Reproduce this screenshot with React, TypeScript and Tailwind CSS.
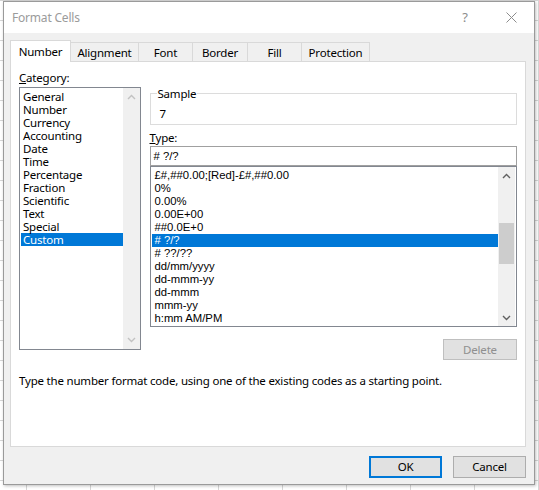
import { useState } from "react";

const categories = [
  "General",
  "Number",
  "Currency",
  "Accounting",
  "Date",
  "Time",
  "Percentage",
  "Fraction",
  "Scientific",
  "Text",
  "Special",
  "Custom",
];

const formats = [
  "£#,##0.00;[Red]-£#,##0.00",
  "0%",
  "0.00%",
  "0.00E+00",
  "##0.0E+0",
  "# ?/?",
  "# ??/??",
  "dd/mm/yyyy",
  "dd-mmm-yy",
  "dd-mmm",
  "mmm-yy",
  "h:mm AM/PM",
];

const tabs = [
  { name: "Number", w: "w-[61px]" },
  { name: "Alignment", w: "w-[68px]" },
  { name: "Font", w: "w-[54px]" },
  { name: "Border", w: "w-[55px]" },
  { name: "Fill", w: "w-[54px]" },
  { name: "Protection", w: "w-[68px]" },
];

function Chevron({ up, color }: { up?: boolean; color: string }) {
  return (
    <svg width="9" height="6" viewBox="0 0 9 6">
      <path
        d={up ? "M1 5 L4.5 1.5 L8 5" : "M1 1 L4.5 4.5 L8 1"}
        fill="none"
        stroke={color}
        strokeWidth="1.4"
      />
    </svg>
  );
}

export default function App() {
  const [category, setCategory] = useState("Custom");
  const [format, setFormat] = useState("# ?/?");

  return (
    <div className="w-[539px] h-[490px] overflow-hidden bg-white bg-[linear-gradient(to_right,#d6d6d6_1px,transparent_1px),linear-gradient(to_bottom,#d6d6d6_1px,transparent_1px)] bg-[size:64px_20px] bg-[position:26px_0px] pt-px pl-[3px] font-['Noto_Sans',sans-serif] text-[11.5px] tracking-[-0.2px] text-black">
      <div className="w-[532px] h-[484px] border border-[#9a9a9a] bg-[#f0f0f0] flex flex-col shadow-[1px_1px_3px_rgba(0,0,0,0.25)]">
        {/* Title bar */}
        <div className="h-[31px] bg-white flex items-center">
          <span className="pl-[8px] text-[12px] text-[#9b9b9b] flex-1">Format Cells</span>
          <div className="w-[46px] h-full flex items-center justify-center text-[#8c8c8c] text-[13px]">?</div>
          <div className="w-[46px] h-full flex items-center justify-center">
            <svg width="11" height="11" viewBox="0 0 11 11">
              <path d="M0.5 0.5 L10.5 10.5 M10.5 0.5 L0.5 10.5" stroke="#8c8c8c" strokeWidth="1" />
            </svg>
          </div>
        </div>

        <div className="flex flex-col pt-[7px] pl-[6px]">
          {/* Tabs */}
          <div className="flex items-end h-[21px]">
            {tabs.map((t) =>
              t.name === "Number" ? (
                <div
                  key={t.name}
                  className={`${t.w} h-[22px] -mb-px relative z-10 bg-white border-l border-t border-r border-[#d9d9d9] flex items-center justify-center pt-px`}
                >
                  {t.name}
                </div>
              ) : (
                <div
                  key={t.name}
                  className={`${t.w} h-[19px] border-t border-r border-[#d9d9d9] flex items-center justify-center pt-[2px]`}
                >
                  {t.name}
                </div>
              )
            )}
          </div>

          {/* Panel */}
          <div className="w-[516px] h-[386px] bg-white border border-[#d9d9d9] px-[8px] pt-[8px] flex flex-col">
            <div className="flex gap-[9px]">
              {/* Category */}
              <div className="w-[122px] flex flex-col">
                <div className="h-[17px] leading-[15px]">
                  <span className="underline">C</span>ategory:
                </div>
                <div className="h-[263px] border border-[#828790] flex">
                  <div className="flex-1 pt-[2px] pl-px">
                    {categories.map((c) => (
                      <div
                        key={c}
                        onClick={() => setCategory(c)}
                        className={`h-[13px] leading-[13px] pl-[2px] ${c === category ? "bg-[#0078d7] text-white" : ""}`}
                      >
                        {c}
                      </div>
                    ))}
                  </div>
                  <div className="w-[17px] bg-[#f0f0f0] flex flex-col justify-between items-center py-[6px]">
                    <Chevron up color="#c2c2c2" />
                    <Chevron color="#c2c2c2" />
                  </div>
                </div>
              </div>

              {/* Right side */}
              <div className="w-[369px] flex flex-col">
                <fieldset className="mt-[16px] h-[39px] border border-[#dcdcdc] pl-[6px]">
                  <legend className="px-px leading-[15px]">Sample</legend>
                  <div className="pl-[3px] pt-[5px] leading-[15px]">7</div>
                </fieldset>

                <div className="mt-[5px] h-[16px] leading-[15px]">
                  <span className="underline">T</span>ype:
                </div>
                <div className="h-[20px] border border-[#a0a0a0] flex items-center pl-[3px] font-['Liberation_Sans',Arial,sans-serif] text-[11.3px] tracking-normal">
                  {format}
                </div>
                <div className="h-[161px] border border-[#828790] flex font-['Liberation_Sans',Arial,sans-serif] text-[11.3px] tracking-normal">
                  <div className="flex-1 pt-[2px] pl-px">
                    {formats.map((f) => (
                      <div
                        key={f}
                        onClick={() => setFormat(f)}
                        className={`h-[13px] leading-[13px] pl-[3px] ${f === format ? "bg-[#0078d7] text-white" : ""}`}
                      >
                        {f}
                      </div>
                    ))}
                  </div>
                  <div className="w-[17px] mr-px bg-[#f0f0f0] flex flex-col items-center">
                    <div className="h-[17px] flex items-center justify-center">
                      <Chevron up color="#606060" />
                    </div>
                    <div className="mt-[39px] w-[15px] h-[41px] bg-[#cdcdcd]" />
                    <div className="flex-1" />
                    <div className="h-[17px] flex items-center justify-center">
                      <Chevron color="#606060" />
                    </div>
                  </div>
                </div>

                <button className="mt-[12px] self-end w-[74px] h-[21px] border border-[#bfbfbf] bg-[#e1e1e1] text-[#8f8f8f] flex items-center justify-center">
                  Delete
                </button>
              </div>
            </div>

            <div className="mt-[13px] leading-[15px]">
              Type the number format code, using one of the existing codes as a starting point.
            </div>
          </div>

          {/* Buttons */}
          <div className="w-[516px] flex justify-end gap-[11px] mt-[9px]">
            <button className="w-[73px] h-[22px] border-2 border-[#0078d7] bg-[#e1e1e1] flex items-center justify-center">
              OK
            </button>
            <button className="w-[73px] h-[22px] border border-[#adadad] bg-[#e1e1e1] flex items-center justify-center">
              Cancel
            </button>
          </div>
        </div>
      </div>
    </div>
  );
}
